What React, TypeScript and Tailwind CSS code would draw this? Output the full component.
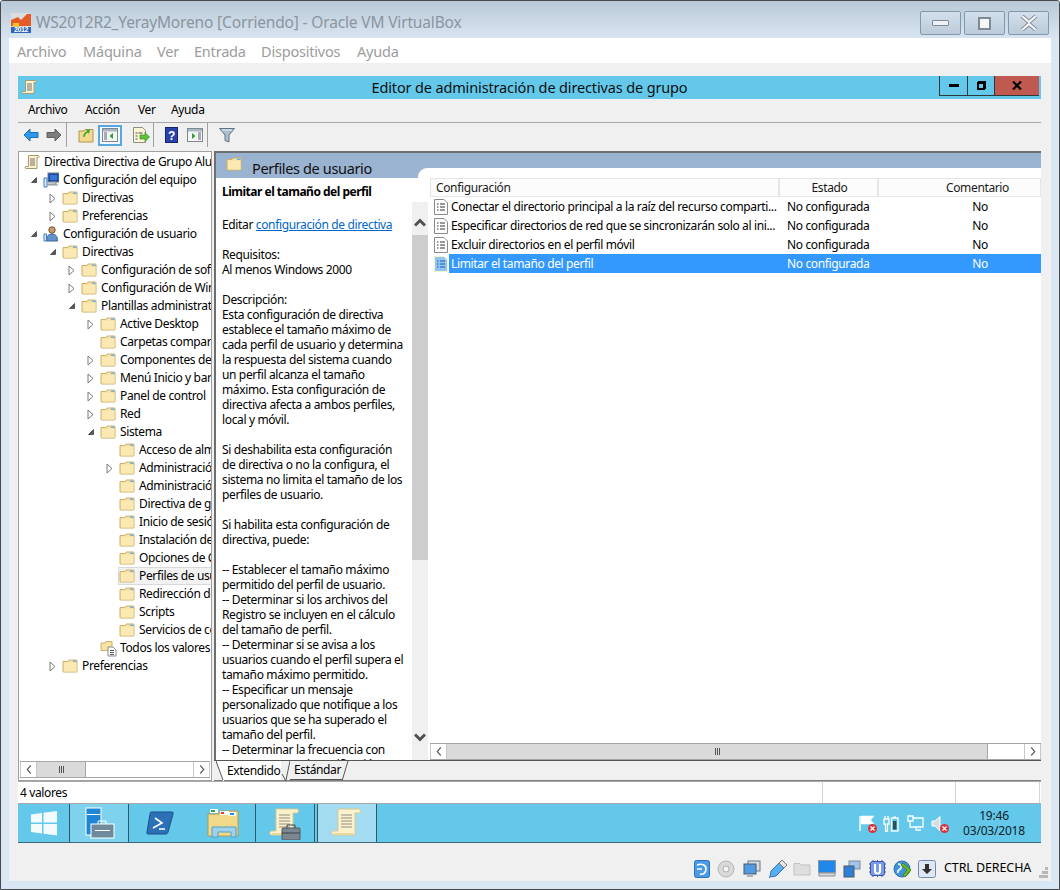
import React from "react";

const FolderIcon = ({ className = "w-[16px] h-[14px]" }: { className?: string }) => (
  <svg viewBox="0 0 16 14" className={className}>
    <path d="M1 2.500h5l1-1.500h7.500a.5.5 0 0 1 .5.5v11a.5.5 0 0 1-.5.5h-13a.5.5 0 0 1-.5-.5z" fill="#f8e3a4" stroke="#cdb06a" />
    <path d="M2 4h12.500v8.500H2z" fill="#fbe9b4" />
    <path d="M11 1.500h3.500v1.500H11z" fill="#6fb1e6" />
  </svg>
);

const ScrollIcon = ({ className = "w-[17px] h-[17px]" }: { className?: string }) => (
  <svg viewBox="0 0 17 17" className={className}>
    <path d="M4.500 1.500h10c1 0 1 2 0 2h-1.500v11H2c-1.200 0-1.200-2 0-2h2.500z" fill="#fbf3d0" stroke="#a89a74" />
    <path d="M6 5h5M6 7h5M6 9h5M6 11h5" stroke="#77736a" />
  </svg>
);

const ScrollLarge = () => (
  <svg viewBox="0 0 32 32" className="w-[32px] h-[32px]">
    <path d="M7 2h21c2 0 2 4 0 4h-4v22H3c-3 0-3-4 0-4h4z" fill="#fbf1cc" stroke="#d8c88f" />
    <path d="M10 8h11M10 11h11M10 14h11M10 17h11M10 20h11" stroke="#8f8c83" />
    <path d="M3 26h19v2H3z" fill="#e8d89a" />
  </svg>
);

const PolicyIcon = ({ selected = false }: { selected?: boolean }) => (
  <svg viewBox="0 0 14 16" className="w-[14px] h-[16px]">
    <path d="M.5.500h9.500l3.500 3.500v11.500H.5z" fill={selected ? "#8fc4f5" : "#ffffff"} stroke={selected ? "#f1f6c8" : "#8a8a8a"} />
    <path d="M3 5h1.500M6 5h5M3 8h1.500M6 8h5M3 11h1.500M6 11h5" stroke={selected ? "#1f5da8" : "#333333"} />
  </svg>
);

const ArrowOpen = () => (
  <svg viewBox="0 0 8 8" className="w-[8px] h-[8px]">
    <path d="M6.500 1.500v5h-5z" fill="#595959" stroke="#595959" />
  </svg>
);

const ArrowClosed = () => (
  <svg viewBox="0 0 9 11" className="w-[9px] h-[11px]">
    <path d="M2 1l5 4.500L2 10z" fill="#ffffff" stroke="#7a7a7a" />
  </svg>
);

const ComputerIcon = () => (
  <svg viewBox="0 0 16 16" className="w-[16px] h-[16px]">
    <rect x="5" y="1" width="11" height="9" fill="#21489c" stroke="#6c7a8e" />
    <path d="M7 3h7v5H7z" fill="#2f7be0" />
    <path d="M8 10h5v2H5v1h10" stroke="#8c94a0" fill="#c5ccd6" />
    <path d="M1 6h3v9H1z" fill="#dfe8f3" stroke="#3d7cc0" />
  </svg>
);

const UserIcon = () => (
  <svg viewBox="0 0 16 16" className="w-[16px] h-[16px]">
    <circle cx="9" cy="4" r="3.200" fill="#c99a6b" stroke="#7a5230" />
    <path d="M3.500 15c0-5 2-7 5.500-7s5.500 2 5.500 7z" fill="#5f93c9" stroke="#3a6595" />
    <path d="M1 8h2.500v7H1z" fill="#dfe8f3" stroke="#3d7cc0" />
  </svg>
);

const AllValuesIcon = () => (
  <svg viewBox="0 0 17 17" className="w-[17px] h-[17px]">
    <path d="M1 3h4l1-1.500h6v9H1z" fill="#f8e3a4" stroke="#cdb06a" />
    <path d="M8 7h5l3 3v6H8z" fill="#ffffff" stroke="#8a8a8a" />
    <path d="M10 10.500h4M10 12.500h4M10 14.500h4" stroke="#555555" />
  </svg>
);

const Chevron = ({ dir, className = "" }: { dir: "l" | "r" | "u" | "d"; className?: string }) => {
  const paths = { l: "M6.500 1.500L2.500 6l4 4.500", r: "M2.500 1.500l4 4.500-4 4.500", u: "M1 8.500L6 3.500l5 5", d: "M1 3.500L6 8.500l5-5" };
  return (
    <svg viewBox={dir === "l" || dir === "r" ? "0 0 9 12" : "0 0 12 12"} className={className}>
      <path d={paths[dir]} fill="none" stroke="currentColor" strokeWidth={dir === "u" || dir === "d" ? 3 : 1.300} />
    </svg>
  );
};

const HScrollBar = ({ thumb, gap }: { thumb: string; gap: string }) => (
  <div className="flex h-[17px] shrink-0 border-y border-[#a6a6a6] bg-white">
    <div className="flex w-[17px] shrink-0 items-center justify-center border-x border-[#c8c8c8] text-[#606060]">
      <Chevron dir="l" className="w-[8px] h-[11px]" />
    </div>
    <div className={`flex items-center justify-center gap-px border-r border-[#a6a6a6] bg-[#dadada] ${thumb}`}>
      <span className="w-px h-[7px] bg-[#555555]" />
      <span className="w-px h-[7px] bg-[#555555]" />
      <span className="w-px h-[7px] bg-[#555555]" />
    </div>
    <div className={gap} />
    <div className="flex w-[17px] shrink-0 items-center justify-center border-x border-[#c8c8c8] text-[#606060]">
      <Chevron dir="r" className="w-[8px] h-[11px]" />
    </div>
  </div>
);

type Node = { level: number; arrow?: "open" | "closed"; label: string; icon?: "scroll" | "pc" | "user" | "all"; selected?: boolean };

const tree: Node[] = [
  { level: 0, label: "Directiva Directiva de Grupo Alumnos", icon: "scroll" },
  { level: 1, arrow: "open", label: "Configuración del equipo", icon: "pc" },
  { level: 2, arrow: "closed", label: "Directivas" },
  { level: 2, arrow: "closed", label: "Preferencias" },
  { level: 1, arrow: "open", label: "Configuración de usuario", icon: "user" },
  { level: 2, arrow: "open", label: "Directivas" },
  { level: 3, arrow: "closed", label: "Configuración de software" },
  { level: 3, arrow: "closed", label: "Configuración de Windows" },
  { level: 3, arrow: "open", label: "Plantillas administrativas" },
  { level: 4, arrow: "closed", label: "Active Desktop" },
  { level: 4, label: "Carpetas compartidas" },
  { level: 4, arrow: "closed", label: "Componentes de Windows" },
  { level: 4, arrow: "closed", label: "Menú Inicio y barra" },
  { level: 4, arrow: "closed", label: "Panel de control" },
  { level: 4, arrow: "closed", label: "Red" },
  { level: 4, arrow: "open", label: "Sistema" },
  { level: 5, label: "Acceso de almacenamiento" },
  { level: 5, arrow: "closed", label: "Administración de" },
  { level: 5, label: "Administración de" },
  { level: 5, label: "Directiva de grupo" },
  { level: 5, label: "Inicio de sesión" },
  { level: 5, label: "Instalación de" },
  { level: 5, label: "Opciones de Ctrl" },
  { level: 5, label: "Perfiles de usuario", selected: true },
  { level: 5, label: "Redirección de" },
  { level: 5, label: "Scripts" },
  { level: 5, label: "Servicios de comunicación" },
  { level: 4, label: "Todos los valores", icon: "all" },
  { level: 2, arrow: "closed", label: "Preferencias" },
];

const indents = ["pl-[5px]", "pl-[10px]", "pl-[29px]", "pl-[48px]", "pl-[67px]", "pl-[86px]"];

const TreeRow = ({ node }: { node: Node }) => (
  <div className={`flex h-[18px] items-center whitespace-nowrap ${indents[node.level]}`}>
    {node.level > 0 && (
      <div className="flex w-[14px] shrink-0 items-center justify-center pr-[5px]">
        {node.arrow === "open" && <ArrowOpen />}
        {node.arrow === "closed" && <ArrowClosed />}
      </div>
    )}
    <div className={`flex h-[18px] flex-1 items-center border ${node.selected ? "border-[#d9d9d9] bg-[#f2f2f2]" : "border-transparent"} -ml-px`}>
      <div className="flex w-[20px] shrink-0 items-center">
        {node.icon === "scroll" ? <ScrollIcon /> : node.icon === "pc" ? <ComputerIcon /> : node.icon === "user" ? <UserIcon /> : node.icon === "all" ? <AllValuesIcon /> : <FolderIcon />}
      </div>
      <span className="text-black">{node.label}</span>
    </div>
  </div>
);

const descLines = [
  "Editar",
  "",
  "Requisitos:",
  "Al menos Windows 2000",
  "",
  "Descripción:",
  "Esta configuración de directiva",
  "establece el tamaño máximo de",
  "cada perfil de usuario y determina",
  "la respuesta del sistema cuando",
  "un perfil alcanza el tamaño",
  "máximo. Esta configuración de",
  "directiva afecta a ambos perfiles,",
  "local y móvil.",
  "",
  "Si deshabilita esta configuración",
  "de directiva o no la configura, el",
  "sistema no limita el tamaño de los",
  "perfiles de usuario.",
  "",
  "Si habilita esta configuración de",
  "directiva, puede:",
  "",
  "-- Establecer el tamaño máximo",
  "permitido del perfil de usuario.",
  "-- Determinar si los archivos del",
  "Registro se incluyen en el cálculo",
  "del tamaño de perfil.",
  "-- Determinar si se avisa a los",
  "usuarios cuando el perfil supera el",
  "tamaño máximo permitido.",
  "-- Especificar un mensaje",
  "personalizado que notifique a los",
  "usuarios que se ha superado el",
  "tamaño del perfil.",
  "-- Determinar la frecuencia con",
  "que se muestra la notificación.",
];

const rows = [
  "Conectar el directorio principal a la raíz del recurso comparti...",
  "Especificar directorios de red que se sincronizarán solo al ini...",
  "Excluir directorios en el perfil móvil",
  "Limitar el tamaño del perfil",
];

const MenuText = ({ className, children }: { className: string; children: React.ReactNode }) => <span className={className}>{children}</span>;

const ToolSep = () => <span className="block h-[24px] w-px bg-[#a0a0a0]" />;

const WinButton = ({ children }: { children: React.ReactNode }) => (
  <div className="flex h-[24px] w-[41px] items-center justify-center rounded-[2px] border border-[#8299ad] bg-gradient-to-b from-[#d3dfeb] to-[#bccbda]">
    {children}
  </div>
);

const VBoxIcons = () => (
  <div className="flex items-center">
    <svg viewBox="0 0 16 18" className="w-[16px] h-[18px] ml-[694px]">
      <rect x=".5" y=".5" width="15" height="17" rx="2" fill="#4a9be8" stroke="#2f6fb8" />
      <path d="M3 5c5-2 9 0 9 4s-3 6-6 5" fill="none" stroke="#ffffff" strokeWidth="1.600" />
      <path d="M3 9h5" stroke="#ffffff" strokeWidth="1.500" />
    </svg>
    <svg viewBox="0 0 18 18" className="w-[18px] h-[18px] ml-[7px]">
      <circle cx="9" cy="9" r="8" fill="#d9d9d9" stroke="#b5b5b5" />
      <circle cx="9" cy="9" r="3" fill="#f3f3f3" stroke="#b0b0b0" />
    </svg>
    <svg viewBox="0 0 18 18" className="w-[18px] h-[18px] ml-[8px]">
      <rect x="5" y="1" width="12" height="10" fill="#d6dde5" stroke="#6d7680" />
      <rect x="1" y="4" width="12" height="10" fill="#4f9be6" stroke="#4f5963" />
      <path d="M4 14h6v3H4z" fill="#aab2bb" />
    </svg>
    <svg viewBox="0 0 20 20" className="w-[20px] h-[20px] ml-[7px]">
      <path d="M2 18l1-6 8-8 5 5-8 8z" fill="#58aef0" stroke="#2f74c0" />
      <path d="M11 4l3-3 5 5-3 3z" fill="#e6e6e6" stroke="#7a7a7a" />
      <path d="M2 18l-1 1" stroke="#2f74c0" />
    </svg>
    <svg viewBox="0 0 18 15" className="w-[18px] h-[15px] ml-[5px]">
      <path d="M1 2.500h6l1 1.500h9v10H1z" fill="#dedede" stroke="#c2c2c2" />
    </svg>
    <svg viewBox="0 0 18 18" className="w-[18px] h-[18px] ml-[7px]">
      <rect x=".5" y=".5" width="17" height="12" fill="#1f86ea" stroke="#8a96a3" />
      <path d="M1 13h16v3H1z" fill="#d6d9dd" stroke="#8a8f96" />
    </svg>
    <svg viewBox="0 0 18 18" className="w-[18px] h-[18px] ml-[7px]">
      <rect x="6" y="1" width="11" height="8" fill="#9fc6f0" stroke="#7f8b98" />
      <rect x="1" y="6" width="10" height="11" fill="#2f7fd8" stroke="#4f5963" />
    </svg>
    <svg viewBox="0 0 19 19" className="w-[19px] h-[19px] ml-[7px]">
      <rect x="2.500" y="2.500" width="14" height="14" rx="2" fill="#7b9ae8" stroke="#3b55b0" />
      <path d="M1 5h2M1 9h2M1 13h2M16 5h2M16 9h2M16 13h2M5 1v2M9.500 1v2M14 1v2M5 16v2M9.500 16v2M14 16v2" stroke="#3b55b0" />
      <path d="M7 5v7a2.500 2.500 0 0 0 5 0V5" fill="none" stroke="#ffffff" strokeWidth="2" />
    </svg>
    <svg viewBox="0 0 20 20" className="w-[20px] h-[20px] ml-[6px]">
      <circle cx="9" cy="10" r="8" fill="#3f92dd" stroke="#2c6fae" />
      <path d="M5 5c3 0 4 2 3 4S4 11 5 14" fill="none" stroke="#d8ecfa" strokeWidth="2" />
      <path d="M10 4l8 7-6 7-2-2 4-5-6-5z" fill="#6ab82c" stroke="#3f8a16" />
    </svg>
    <svg viewBox="0 0 18 18" className="w-[18px] h-[18px] ml-[5px]">
      <rect x=".5" y=".5" width="17" height="17" rx="2" fill="#dfe7f2" stroke="#6f8bb0" />
      <path d="M7 4h4v5h3l-5 5-5-5h3z" fill="#303030" />
    </svg>
  </div>
);

const RedX = () => (
  <svg viewBox="0 0 9 9" className="absolute -bottom-px -right-[2px] w-[9px] h-[9px]">
    <circle cx="4.500" cy="4.500" r="4.500" fill="#d8333a" />
    <path d="M2.500 2.500l4 4M6.500 2.500l-4 4" stroke="#ffffff" strokeWidth="1.200" />
  </svg>
);

export default function App() {
  return (
    <div className="flex h-[890px] w-[1060px] flex-col overflow-hidden rounded-t-[3px] border border-[#46494d] bg-[#d9e6f3] font-['Noto_Sans',sans-serif] text-[12px] tracking-[-0.36px]">
      {/* host window caption */}
      <div className="flex h-[37px] shrink-0 items-center bg-gradient-to-b from-[#bac9d7] to-[#d8e5f1] pl-[10px] pr-[10px] pt-[7px]">
        <svg viewBox="0 0 20 20" className="w-[20px] h-[20px]">
          <rect x="0" y="0" width="20" height="20" fill="#d9dde2" />
          <path d="M0 7l7-3 3 3 6-6 4 0v12H0z" fill="#e55b25" />
          <path d="M0 14h20v6H0z" fill="#2d63b8" />
          <path d="M2 10h6v4H2z" fill="#f4c430" />
          <text x="10" y="18.500" fontSize="7" fontWeight="700" textAnchor="middle" fill="#ffffff" fontFamily="Liberation Sans">2012</text>
        </svg>
        <span className="ml-[5px] text-[15.5px] tracking-[-0.16px] text-[#8b959e]">WS2012R2_YerayMoreno [Corriendo] - Oracle VM VirtualBox</span>
        <div className="ml-auto flex gap-[3px]">
          <WinButton><span className="h-[6px] w-[17px] rounded-[1px] border border-[#7f8a94] bg-[#eef2f6]" /></WinButton>
          <WinButton><span className="h-[13px] w-[13px] border-2 border-[#7f8a94] bg-[#f4f6f8]" /></WinButton>
          <WinButton>
            <svg viewBox="0 0 18 16" className="w-[18px] h-[16px]">
              <path d="M2 1l7 6 7-6M2 15l7-6 7 6" fill="none" stroke="#7f8a94" strokeWidth="4" />
              <path d="M2 1l7 6 7-6M2 15l7-6 7 6" fill="none" stroke="#f4f6f8" strokeWidth="2.200" />
            </svg>
          </WinButton>
        </div>
      </div>

      <div className="mx-[8px] flex flex-1 flex-col">
        {/* host menu */}
        <div className="flex h-[25px] shrink-0 items-center bg-white pl-[8px] pt-[2px] text-[14.5px] tracking-[-0.2px] text-[#9c9c9c]">
          <MenuText className="w-[66px]">Archivo</MenuText>
          <MenuText className="w-[74px]">Máquina</MenuText>
          <MenuText className="w-[37px]">Ver</MenuText>
          <MenuText className="w-[67px]">Entrada</MenuText>
          <MenuText className="w-[96px]">Dispositivos</MenuText>
          <MenuText>Ayuda</MenuText>
        </div>

        <div className="flex h-[818px] shrink-0 flex-col bg-[#f0f0f0] pl-[9px] pt-[13px]">
          <div className="flex w-[1023px] flex-1 flex-col">
            {/* mmc caption */}
            <div className="flex h-[23px] shrink-0 items-center bg-[#63c8ea]">
              <div className="ml-[3px] w-[18px]"><ScrollIcon /></div>
              <span className="flex-1 pl-[81px] text-center text-[14.5px] tracking-[-0.14px] text-[#101010]">Editor de administración de directivas de grupo</span>
              <div className="flex h-[20px] self-start border-b border-[#2a3a40]">
                <div className="flex w-[28px] items-center justify-center border-l border-[#2a3a40]"><span className="h-[3px] w-[10px] bg-black" /></div>
                <div className="flex w-[27px] items-center justify-center border-l border-[#2a3a40]">
                  <span className="relative h-[8px] w-[8px] border-2 border-black"><span className="absolute -right-[3px] -top-[3px] h-[8px] w-[8px] border-r border-t border-black" /></span>
                </div>
                <div className="flex w-[45px] items-center justify-center border-l border-[#2a3a40] bg-[#c0594f]">
                  <svg viewBox="0 0 10 9" className="w-[10px] h-[9px]"><path d="M1 .5l8 8M9 .5l-8 8" stroke="#000000" strokeWidth="2.200" /></svg>
                </div>
              </div>
              <div className="w-[2px]" />
            </div>
            {/* mmc menu */}
            <div className="flex h-[24px] shrink-0 items-center border-b border-[#a8a8a8] pb-[2px] pl-[10px] text-black">
              <span className="w-[57px]">Archivo</span>
              <span className="w-[53px]">Acción</span>
              <span className="w-[33px]">Ver</span>
              <span>Ayuda</span>
            </div>
            {/* toolbar */}
            <div className="flex h-[28px] shrink-0 items-center pb-[4px] pl-[5px]">
              <svg viewBox="0 0 16 14" className="w-[16px] h-[14px]"><path d="M7 1L1 7l6 6V9.500h8v-5H7z" fill="#2e9bea" stroke="#1a6fb8" /></svg>
              <svg viewBox="0 0 16 14" className="ml-[7px] w-[16px] h-[14px]"><path d="M9 1l6 6-6 6V9.500H1v-5h8z" fill="#7d7d7d" stroke="#5f5f5f" /></svg>
              <div className="ml-[4px]"><ToolSep /></div>
              <svg viewBox="0 0 16 16" className="ml-[11px] w-[16px] h-[16px]">
                <path d="M1 4h5l1-1.500h8V15H1z" fill="#f3d98e" stroke="#b3954e" />
                <path d="M5 10c0-3 2-5 4-6l-1-2 4 1-1 4-1-1.500c-2 1-3 2-3 4z" fill="#3da832" />
              </svg>
              <div className="ml-[4px] flex h-[21px] w-[24px] items-center justify-center border-2 border-[#59a7e0] bg-[#f3f9fd]">
                <svg viewBox="0 0 16 14" className="w-[16px] h-[14px]">
                  <rect x=".5" y=".5" width="15" height="13" fill="#f4f4f4" stroke="#7d8893" />
                  <path d="M1 1h14v2.500H1z" fill="#a9b5c0" />
                  <path d="M2 5h3M2 7h3M2 9h3M2 11h3" stroke="#59646f" />
                  <path d="M11 5v6L7.500 8z" fill="#2d9e3a" />
                </svg>
              </div>
              <svg viewBox="0 0 18 17" className="ml-[10px] w-[18px] h-[17px]">
                <path d="M1.500.5h9l3 3v12h-12z" fill="#fbf5d8" stroke="#8e8e80" />
                <path d="M3.500 6h2M3.500 9h2M3.500 12h2M6.500 6h4" stroke="#4c4c4c" />
                <path d="M8 8h5V5.500L17.500 10 13 14.500V12H8z" fill="#5fc23a" stroke="#3c8a20" strokeWidth=".7" />
              </svg>
              <div className="ml-[3px]"><ToolSep /></div>
              <svg viewBox="0 0 13 16" className="ml-[11px] w-[13px] h-[16px]">
                <rect x=".5" y=".5" width="12" height="15" fill="#2941a8" stroke="#16246e" />
                <text x="6.500" y="12.500" fontSize="12" fontWeight="700" textAnchor="middle" fill="#ffffff" fontFamily="Liberation Sans">?</text>
              </svg>
              <svg viewBox="0 0 16 14" className="ml-[9px] w-[16px] h-[14px]">
                <rect x=".5" y=".5" width="15" height="13" fill="#f4f4f4" stroke="#7d8893" />
                <path d="M1 1h14v2.500H1z" fill="#a9b5c0" />
                <path d="M11 5h3M11 7h3M11 9h3M11 11h3" stroke="#59646f" />
                <path d="M5 5v6l3.500-3z" fill="#2d9e3a" />
              </svg>
              <div className="ml-[4px]"><ToolSep /></div>
              <svg viewBox="0 0 16 16" className="ml-[11px] w-[16px] h-[16px]">
                <path d="M.5 1.500h15L10 8v7l-4-1.500V8z" fill="#a9bfcf" stroke="#5f7482" />
                <path d="M3 3h10" stroke="#e8eef3" />
              </svg>
            </div>

            {/* panes */}
            <div className="flex h-[630px] shrink-0">
              <div className="flex w-[194px] shrink-0 flex-col border border-[#a0a0a0] bg-white pt-px">
                <div className="flex-1 overflow-hidden pr-[2px]">
                  {tree.map((node, i) => (
                    <TreeRow key={i} node={node} />
                  ))}
                </div>
                <div className="mx-px mb-[2px]">
                  <HScrollBar thumb="w-[49px]" gap="flex-1" />
                </div>
              </div>
              <div className="ml-[2px] flex min-w-0 flex-1 flex-col">
                <div className="flex min-h-0 flex-1 flex-col border-l-2 border-t-2 border-[#6f6f6f]">
                  <div className="flex h-[25px] shrink-0 bg-[#9ab3d0]">
                    <div className="flex flex-1 items-start pl-[10px] pt-[4px]">
                      <FolderIcon />
                      <span className="ml-[10px] text-[14.5px] leading-[22px] tracking-[-0.36px] text-[#111111]">Perfiles de usuario</span>
                    </div>
                    <div className="h-[10px] w-[623px] self-end rounded-tl-[9px] bg-white" />
                  </div>
                  <div className="flex min-h-0 flex-1 bg-white">
                    <div className="w-[196px] shrink-0 overflow-hidden pl-[6px] pt-[6px] leading-[15px] text-black">
                      <div className="mb-[18px] font-bold tracking-[-0.5px]">Limitar el tamaño del perfil</div>
                      {descLines.map((line, i) => (
                        <div key={i} className="h-[15px] whitespace-nowrap">
                          {line}
                          {line === "Editar" && (
                            <>
                              {" "}
                              <span className="text-[#0066cc] underline">configuración de directiva</span>
                            </>
                          )}
                        </div>
                      ))}
                    </div>
                    <div className="flex w-[16px] shrink-0 flex-col pt-[24px]">
                      <div className="flex flex-1 flex-col bg-[#f0f0f0]">
                        <div className="flex h-[33px] shrink-0 items-end justify-center pb-[6px] text-[#505050]"><Chevron dir="u" className="w-[12px] h-[12px]" /></div>
                        <div className="h-[325px] shrink-0 bg-[#cdcdcd]" />
                        <div className="flex flex-1 items-end justify-center pb-[17px] text-[#505050]"><Chevron dir="d" className="w-[12px] h-[12px]" /></div>
                      </div>
                    </div>
                    <div className="ml-[2px] flex min-w-0 flex-1 flex-col">
                      <div className="flex h-[19px] shrink-0 border border-[#e5e5e5] bg-[#fcfcfc] text-[#1a1a1a]">
                        <div className="w-[349px] border-r-2 border-[#e5e5e5] pl-[5px] leading-[17px]">Configuración</div>
                        <div className="w-[99px] border-r-2 border-[#e5e5e5] pl-[2px] text-center leading-[17px]">Estado</div>
                        <div className="flex-1 pl-[36px] text-center leading-[17px]">Comentario</div>
                      </div>
                      <div className="flex-1">
                        {rows.map((row, i) => (
                          <div key={row} className="flex h-[19px] items-center">
                            <div className="flex w-[19px] shrink-0 justify-end pr-[1px] pl-[4px]">
                              <PolicyIcon selected={i === 3} />
                            </div>
                            <div className={`flex h-[19px] flex-1 items-center ${i === 3 ? "bg-[#3399ff] text-white" : "text-black"}`}>
                              <span className="w-[331px] shrink-0 whitespace-nowrap pl-[2px]">{row}</span>
                              <span className="w-[160px] shrink-0 pl-[7px]">No configurada</span>
                              <span className="flex-1 pr-[21px] text-center">No</span>
                            </div>
                          </div>
                        ))}
                      </div>
                      <HScrollBar thumb="w-[541px]" gap="flex-1" />
                    </div>
                  </div>
                </div>
                {/* tabs */}
                <div className="flex h-[21px] shrink-0 items-start border-t border-b border-[#555555] border-b-[#808080] pl-[2px]">
                  <svg viewBox="0 0 8 20" className="h-[20px] w-[8px]"><path d="M0 0l7 20H8V0z" fill="#ffffff" /><path d="M0 0l7 19" stroke="#555555" fill="none" /></svg>
                  <div className="flex h-[19px] w-[57px] items-center bg-white pl-[3px] text-black">Extendido</div>
                  <svg viewBox="0 0 9 20" className="h-[20px] w-[9px]"><path d="M1 13l4 7M5 19L9 0" stroke="#555555" fill="none" /></svg>
                  <div className="flex h-[19px] w-[52px] items-center border-b border-[#555555] pl-[4px] text-black">Estándar</div>
                  <svg viewBox="0 0 7 20" className="h-[20px] w-[7px]"><path d="M0 20L6 0" stroke="#555555" fill="none" /></svg>
                </div>
              </div>
            </div>

            {/* status */}
            <div className="flex h-[23px] shrink-0 border-y border-[#a8a8a8] bg-white pl-[2px] text-black">
              <span className="w-[802px] leading-[22px]">4 valores</span>
              <span className="w-[133px] border-l border-[#d5d5d5]" />
              <span className="w-[85px] border-x border-[#d5d5d5]" />
            </div>

            {/* guest taskbar */}
            <div className="flex h-[39px] shrink-0 items-center border-b border-[#3e6a78] bg-[#63c8ea]">
              <div className="flex h-full w-[51px] items-center justify-center">
                <svg viewBox="0 0 28 28" className="w-[28px] h-[28px]">
                  <path d="M1 5.500l11-1.500v9.500H1zM13.500 3.800L27 2v11.500H13.500zM1 15h11v9.500L1 23zM13.500 15H27v11.500L13.500 24.700z" fill="#f4fbfe" />
                </svg>
              </div>
              <div className="flex h-full w-[60px] items-center justify-center border-x border-[#2e5a68] bg-[#7fd2ee]">
                <svg viewBox="0 0 32 32" className="w-[32px] h-[32px]">
                  <rect x="3" y="1" width="15" height="27" fill="#1f86d6" stroke="#ffffff" />
                  <path d="M4 7.500h13" stroke="#ffffff" />
                  <rect x="8" y="17" width="23" height="14" fill="#6f8a9c" stroke="#ffffff" />
                  <path d="M15 17v-3h8v3M12 23.500h15" stroke="#ffffff" fill="none" />
                </svg>
              </div>
              <div className="flex h-full w-[62px] items-center justify-center">
                <svg viewBox="0 0 28 24" className="w-[28px] h-[24px]">
                  <path d="M5 1h21c1 0 1.500 1 1 2l-5 18c-.3 1-1 2-2 2H2c-1 0-1.500-1-1-2L4 3c.2-1 .5-2 1-2z" fill="#2c71b8" stroke="#1d4f86" />
                  <path d="M9 7l7 5-9 5M13 18h6" fill="none" stroke="#ffffff" strokeWidth="1.600" />
                </svg>
              </div>
              <div className="flex h-full w-[64px] items-center justify-center">
                <svg viewBox="0 0 32 30" className="w-[32px] h-[30px]">
                  <path d="M1 6h11l1-3h18v25H1z" fill="#f1d98a" stroke="#b49a50" />
                  <path d="M3 1h8v4H3z" fill="#fff" />
                  <path d="M4 2h4v2H4z" fill="#2fa84a" />
                  <path d="M13 3h9v4h-9z" fill="#fff" />
                  <path d="M14 4h3v2h-3z" fill="#d8442f" />
                  <path d="M21 4h8v4h-8z" fill="#fff" />
                  <path d="M23 5h4v2h-4z" fill="#2f86d8" />
                  <path d="M5 19h24v10h-5v-5H11v5H5z" fill="#9fd2ea" stroke="#4f9fc8" />
                </svg>
              </div>
              <div className="flex h-full w-[60px] items-center justify-center border-x border-[#2e5a68]">
                <div className="relative h-[32px] w-[32px]">
                  <ScrollLarge />
                  <svg viewBox="0 0 20 16" className="absolute -bottom-px right-0 w-[20px] h-[16px]">
                    <rect x="1" y="4" width="18" height="12" rx="1" fill="#7d8790" stroke="#4f5860" />
                    <path d="M6 4V1h8v3M1 9h18" stroke="#3d454c" fill="none" />
                  </svg>
                </div>
              </div>
              <div className="ml-[2px] flex h-full w-[60px] items-center justify-center border-x border-[#2e5a68] bg-[#a3dcf1]">
                <ScrollLarge />
              </div>
              <div className="ml-auto flex items-center">
                <div className="relative h-[17px] w-[16px]">
                  <svg viewBox="0 0 16 17" className="h-[17px] w-[16px]"><path d="M1 1v15M2 1.500h12l-3 3.500 3 3.500H2" fill="#ffffff" stroke="#ffffff" strokeWidth="1.400" /></svg>
                  <RedX />
                </div>
                <svg viewBox="0 0 16 17" className="ml-[8px] h-[17px] w-[16px]">
                  <path d="M2 1v3M5 1v3M1 4h5v5H4.500v7h-2V9H1z" fill="none" stroke="#ffffff" strokeWidth="1.300" />
                  <rect x="8.500" y="3" width="6.500" height="13" fill="none" stroke="#ffffff" strokeWidth="1.300" />
                  <rect x="10.500" y="1.500" width="2.500" height="1.500" fill="#ffffff" />
                  <rect x="10" y="6" width="3.500" height="8.500" fill="#2c4f5c" />
                </svg>
                <svg viewBox="0 0 17 17" className="ml-[8px] h-[17px] w-[17px]">
                  <path d="M1 1h5v5H1zM6 3h10v9H6M3 6v6h3M9 12v3h5" fill="none" stroke="#ffffff" strokeWidth="1.300" />
                </svg>
                <div className="relative ml-[7px] h-[17px] w-[16px]">
                  <svg viewBox="0 0 16 17" className="h-[17px] w-[16px]"><path d="M1 6h3l5-4.500v14L4 11H1z" fill="#d8dde0" stroke="#ffffff" /></svg>
                  <RedX />
                </div>
                <div className="ml-[17px] flex w-[60px] flex-col items-center text-[12px] leading-[15px] tracking-[-0.2px] text-[#102028]">
                  <span>19:46</span>
                  <span>03/03/2018</span>
                </div>
                <div className="w-[17px]" />
              </div>
            </div>
          </div>

          {/* vbox status */}
          <div className="relative flex h-[38px] shrink-0 items-center pt-[13px] -ml-[9px]">
            <div className="-ml-[9px] flex items-center">
              <VBoxIcons />
              <span className="ml-[8px] text-[12.5px] tracking-[-0.1px] text-black">CTRL DERECHA</span>
            </div>
            <svg viewBox="0 0 9 12" className="absolute bottom-[2px] right-[3px] h-[12px] w-[9px]">
              <path d="M6 0h3v3H6zM3 4h3v3H3zM6 4h3v3H6zM0 8h3v3H0zM3 8h3v3H3zM6 8h3v3H6z" fill="#b8b8b8" />
            </svg>
          </div>
        </div>
      </div>
      <div className="h-[7px] shrink-0" />
    </div>
  );
}
